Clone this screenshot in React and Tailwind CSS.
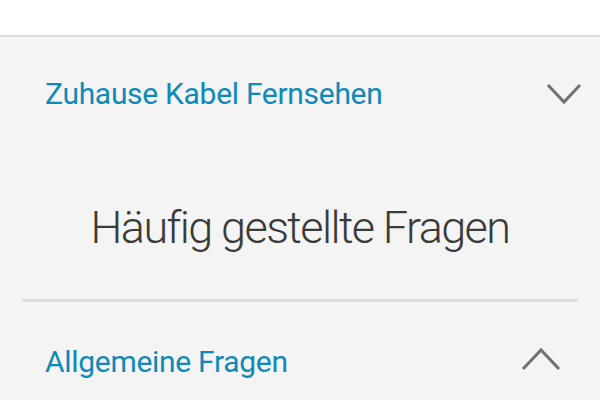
import React from 'react';

const ChevronDown = () => (
  <svg width="36" height="22" viewBox="0 0 36 22" fill="none">
    <polyline points="2,2 18,19 34,2" stroke="#707070" strokeWidth="3" />
  </svg>
);

const ChevronUp = () => (
  <svg width="40" height="24" viewBox="0 0 40 24" fill="none" className="-mt-[6px]">
    <polyline points="2,22 20,3 38,22" stroke="#707070" strokeWidth="3" />
  </svg>
);

export default function App() {
  return (
    <div className="h-screen w-full overflow-hidden bg-[#f4f4f4] font-['Roboto','Liberation_Sans',sans-serif]">
      {/* top bar */}
      <div className="h-[37px] bg-white border-b-2 border-[#dddddd]" />

      {/* Zuhause row */}
      <div className="h-[114px] flex items-center justify-between pl-[45px] pr-[18px]">
        <span className="text-[30px] tracking-[-0.3px] text-[#0f89b7] leading-none">Zuhause Kabel Fernsehen</span>
        <ChevronDown />
      </div>

      {/* title */}
      <div className="h-[148px] flex items-center justify-center pt-[4px]">
        <h1 className="text-[45px] tracking-[-1.6px] font-light text-[#3a3a3a] leading-none">Häufig gestellte Fragen</h1>
      </div>

      <div className="mx-[22px] h-[3px] bg-[#dcdcdc]" />

      {/* Allgemeine row */}
      <div className="h-[120px] flex items-center justify-between pl-[45px] pr-[39px]">
        <span className="text-[30px] tracking-[-0.3px] text-[#0f89b7] leading-none">Allgemeine Fragen</span>
        <ChevronUp />
      </div>
    </div>
  );
}
